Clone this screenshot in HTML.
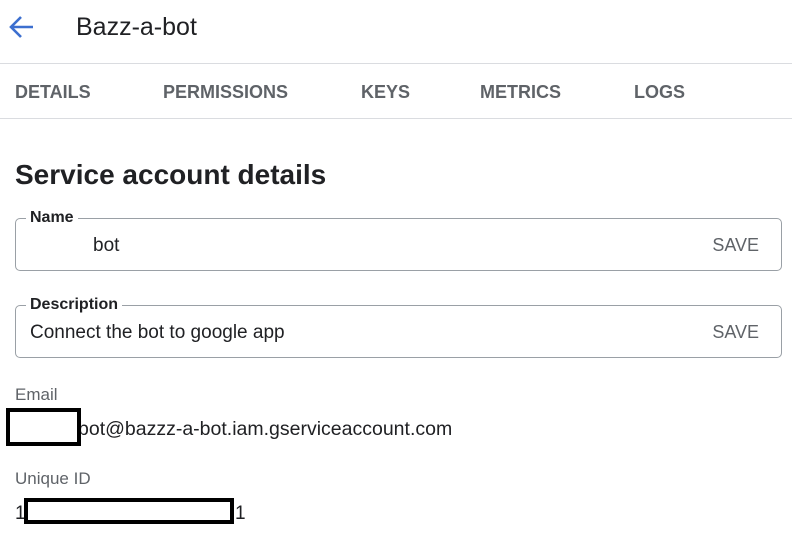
<!DOCTYPE html>
<html><head><meta charset="utf-8"><style>
*{margin:0;padding:0;box-sizing:border-box}
body{width:792px;height:556px;background:#fff;font-family:"Liberation Sans",Arial,sans-serif;position:relative;overflow:hidden;color:#202124}
.a{position:absolute;white-space:nowrap}
.tab{position:absolute;top:82px;font-size:18px;font-weight:bold;color:#5f6368}
.line{position:absolute;left:0;width:792px;height:1px;background:#dadce0}
.field{position:absolute;left:15px;width:767px;height:53px;border:1px solid #9aa0a6;border-radius:5px}
.lbl{position:absolute;left:10px;top:-10px;background:#fff;padding:0 4px;font-size:16px;font-weight:bold;color:#202124}
.val{position:absolute;top:16px;font-size:19px;color:#202124}
.save{position:absolute;right:22px;top:16px;font-size:18px;color:#5f6368}
.box{position:absolute;border:4px solid #000;background:#fff}
</style></head><body>
<svg class="a" style="left:8px;top:14px" width="28" height="26" viewBox="0 0 28 26"><path d="M25 13H4M13 3L3 13l10 10" fill="none" stroke="#3c6fcf" stroke-width="2.6"/></svg>
<div class="a" style="left:76px;top:13px;font-size:25px;color:#202124">Bazz-a-bot</div>
<div class="line" style="top:63px"></div>
<div class="tab" style="left:15px">DETAILS</div>
<div class="tab" style="left:163px">PERMISSIONS</div>
<div class="tab" style="left:361px">KEYS</div>
<div class="tab" style="left:480px">METRICS</div>
<div class="tab" style="left:634px">LOGS</div>
<div class="line" style="top:118px"></div>
<div class="a" style="left:15px;top:159px;font-size:28px;font-weight:bold;color:#202124">Service account details</div>
<div class="field" style="top:218px"><div class="lbl">Name</div><div class="val" style="left:77px">bot</div><div class="save">SAVE</div></div>
<div class="field" style="top:305px"><div class="lbl">Description</div><div class="val" style="left:14px">Connect the bot to google app</div><div class="save">SAVE</div></div>
<div class="a" style="left:15px;top:385px;font-size:17px;color:#5f6368">Email</div>
<div class="a" style="left:78px;top:418px;font-size:19.5px">bot@bazzz-a-bot.iam.gserviceaccount.com</div>
<div class="box" style="left:6px;top:408px;width:75px;height:38px"></div>
<div class="a" style="left:15px;top:469px;font-size:17px;color:#5f6368">Unique ID</div>
<div class="a" style="left:15px;top:503px;font-size:19px">1</div>
<div class="box" style="left:24px;top:498px;width:210px;height:26px"></div>
<div class="a" style="left:235px;top:503px;font-size:19px">1</div>
</body></html>
